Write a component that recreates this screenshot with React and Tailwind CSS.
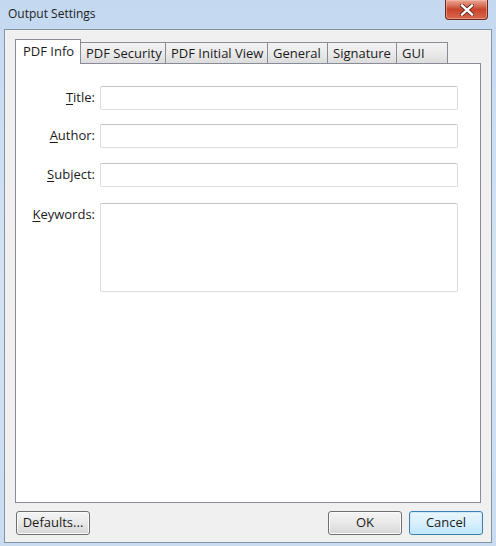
import React from "react";

const tabs = [
  { label: "PDF Info", w: "w-[66px]" },
  { label: "PDF Security", w: "w-[86px]" },
  { label: "PDF Initial View", w: "w-[103px]" },
  { label: "General", w: "w-[61px]" },
  { label: "Signature", w: "w-[70px]" },
  { label: "GUI", w: "w-[52px]" },
];

function Field({ first, rest, tall, className = "" }) {
  return (
    <div className={"flex " + (tall ? "items-start " : "items-center ") + className}>
      <div
        className={
          "w-[79px] mr-[5px] text-right text-[13px] text-[#1b1b1b] " +
          (tall ? "pt-[2px]" : "")
        }
      >
        <span className="underline underline-offset-2">{first}</span>
        {rest}
      </div>
      <div
        className={
          "flex-1 bg-white border border-[#dcdcdc] border-t-[#c4c4c4] rounded-[2px] " +
          (tall ? "h-[89px]" : "h-[24px]")
        }
      />
    </div>
  );
}

export default function App() {
  return (
    <div className="w-[496px] h-[546px] flex flex-col bg-linear-to-b from-[#c4d9f0] via-[#d3e3f4] to-[#c9dcf0] font-['Open_Sans','Noto_Sans',sans-serif] select-none">
      {/* title bar */}
      <div className="h-[29px] flex items-start justify-between shrink-0">
        <div className="pl-[8px] pt-[6px] text-[12px] text-[#1e1e1e] leading-[16px]">
          Output Settings
        </div>
        <div className="mr-[8px] w-[43px] h-[20px] rounded-b-[4px] border border-t-0 border-[#6d2a20] bg-linear-to-b from-[#e9a796] via-[#c8452c] to-[#d8684c] flex items-center justify-center shadow-[inset_0_0_0_1px_rgba(255,200,180,0.45)]">
          <svg width="14" height="12" viewBox="0 0 14 12">
            <path d="M2 1.5 L12 10.5 M12 1.5 L2 10.5" stroke="#5a1a10" strokeWidth="4" strokeLinecap="square" />
            <path d="M2 1.5 L12 10.5 M12 1.5 L2 10.5" stroke="#ffffff" strokeWidth="2.4" strokeLinecap="square" />
          </svg>
        </div>
      </div>

      {/* client area */}
      <div className="flex-1 mx-[4px] mb-[3px] border border-[#8593a6] bg-[#f0f0f0] flex flex-col pl-[10px] pr-[10px] pt-[8px]">
        {/* tabs */}
        <div className="flex items-end h-[25px] relative z-10">
          {tabs.map((t, i) =>
            i === 0 ? (
              <div
                key={t.label}
                className={t.w + " h-[25px] -mb-px bg-white border border-b-0 border-[#898c95] pl-[7px] pt-[2px] text-[13px] text-[#1b1b1b]"}
              >
                {t.label}
              </div>
            ) : (
              <div
                key={t.label}
                className={t.w + " h-[21px] -ml-px border border-b-0 border-[#898c95] bg-linear-to-b from-[#f3f3f3] via-[#ebebeb] to-[#dcdcdc] pl-[5px] text-[13px] leading-[20px] text-[#1b1b1b]"}
              >
                {t.label}
              </div>
            )
          )}
        </div>

        {/* panel */}
        <div className="h-[440px] bg-white border border-[#898c95] pt-[22px] pr-[22px]">
          <Field first="T" rest="itle:" />
          <Field first="A" rest="uthor:" className="mt-[14px]" />
          <Field first="S" rest="ubject:" className="mt-[15px]" />
          <Field first="K" rest="eywords:" tall className="mt-[16px]" />
        </div>

        {/* buttons */}
        <div className="flex items-center mt-[8px] pl-px -mr-[2px] text-[13px] text-[#1b1b1b]">
          <button className="w-[74px] h-[24px] rounded-[3px] border border-[#707070] bg-linear-to-b from-[#f4f4f4] via-[#e9e9e9] to-[#d6d6d6] shadow-[inset_0_0_0_1px_#fbfbfb]">
            Defaults...
          </button>
          <div className="flex-1" />
          <button className="w-[74px] h-[24px] rounded-[3px] border border-[#707070] bg-linear-to-b from-[#f4f4f4] via-[#e9e9e9] to-[#d6d6d6] shadow-[inset_0_0_0_1px_#fbfbfb]">
            OK
          </button>
          <button className="ml-[7px] w-[74px] h-[24px] rounded-[3px] border border-[#3c7fb1] bg-linear-to-b from-[#eaf6fd] via-[#d9f0fc] to-[#bde6fd] shadow-[inset_0_0_0_1px_#cbe9fb]">
            Cancel
          </button>
        </div>
      </div>
    </div>
  );
}
